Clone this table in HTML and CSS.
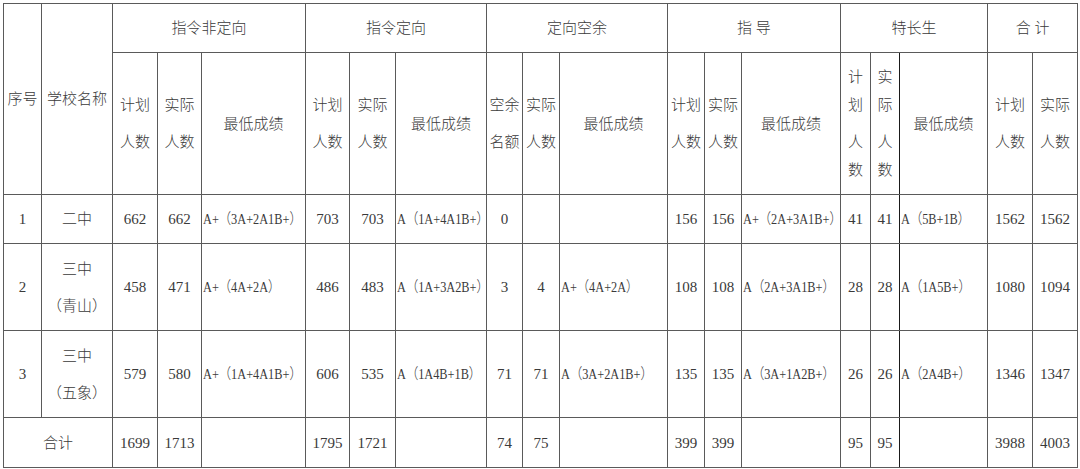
FILE: index.html
```html
<!DOCTYPE html>
<html lang="zh-CN">
<head>
<meta charset="utf-8">
<title>招生录取统计表</title>
<link rel="stylesheet" href="styles.css">
</head>
<body>
<table class="grid">
  <colgroup>
    <col class="w38"><col class="w71">
    <col class="w45"><col class="w44"><col class="w104">
    <col class="w44"><col class="w46"><col class="w91">
    <col class="w36"><col class="w37"><col class="w108">
    <col class="w37"><col class="w37"><col class="w99">
    <col class="w30"><col class="w29"><col class="w88">
    <col class="w45"><col class="w45">
  </colgroup>
  <tr class="rh1">
    <td rowspan="2">序号</td>
    <td rowspan="2">学校名称</td>
    <td colspan="3">指令非定向</td>
    <td colspan="3">指令定向</td>
    <td colspan="3">定向空余</td>
    <td colspan="3">指&nbsp;导</td>
    <td colspan="3">特长生</td>
    <td colspan="2">合&nbsp;计</td>
  </tr>
  <tr class="rh2">
    <td><p>计划</p><p>人数</p></td>
    <td><p>实际</p><p>人数</p></td>
    <td>最低成绩</td>
    <td><p>计划</p><p>人数</p></td>
    <td><p>实际</p><p>人数</p></td>
    <td>最低成绩</td>
    <td><p>空余</p><p>名额</p></td>
    <td><p>实际</p><p>人数</p></td>
    <td>最低成绩</td>
    <td><p>计划</p><p>人数</p></td>
    <td><p>实际</p><p>人数</p></td>
    <td>最低成绩</td>
    <td class="narrow"><p>计划</p><p>人数</p></td>
    <td class="narrow dr"><p>实际</p><p>人数</p></td>
    <td class="dl">最低成绩</td>
    <td><p>计划</p><p>人数</p></td>
    <td><p>实际</p><p>人数</p></td>
  </tr>
  <tr class="rd1">
    <td>1</td>
    <td>二中</td>
    <td>662</td><td>662</td><td class="g"><span class="gt">A+（3A+2A1B+）</span></td>
    <td>703</td><td>703</td><td class="g"><span class="gt">A（1A+4A1B+）</span></td>
    <td>0</td><td></td><td class="g"></td>
    <td>156</td><td>156</td><td class="g"><span class="gt">A+（2A+3A1B+）</span></td>
    <td>41</td><td class="dr">41</td><td class="g dl"><span class="gt">A（5B+1B）</span></td>
    <td>1562</td><td>1562</td>
  </tr>
  <tr class="rd2">
    <td>2</td>
    <td><p>三中</p><p>（青山）</p></td>
    <td>458</td><td>471</td><td class="g"><span class="gt">A+（4A+2A）</span></td>
    <td>486</td><td>483</td><td class="g"><span class="gt">A（1A+3A2B+）</span></td>
    <td>3</td><td>4</td><td class="g"><span class="gt">A+（4A+2A）</span></td>
    <td>108</td><td>108</td><td class="g"><span class="gt">A（2A+3A1B+）</span></td>
    <td>28</td><td class="dr">28</td><td class="g dl"><span class="gt">A（1A5B+）</span></td>
    <td>1080</td><td>1094</td>
  </tr>
  <tr class="rd2">
    <td>3</td>
    <td><p>三中</p><p>（五象）</p></td>
    <td>579</td><td>580</td><td class="g"><span class="gt">A+（1A+4A1B+）</span></td>
    <td>606</td><td>535</td><td class="g"><span class="gt">A（1A4B+1B）</span></td>
    <td>71</td><td>71</td><td class="g"><span class="gt">A（3A+2A1B+）</span></td>
    <td>135</td><td>135</td><td class="g"><span class="gt">A（3A+1A2B+）</span></td>
    <td>26</td><td class="dr">26</td><td class="g dl"><span class="gt">A（2A4B+）</span></td>
    <td>1346</td><td>1347</td>
  </tr>
  <tr class="rt">
    <td colspan="2">合计</td>
    <td>1699</td><td>1713</td><td class="g"></td>
    <td>1795</td><td>1721</td><td class="g"></td>
    <td>74</td><td>75</td><td class="g"></td>
    <td>399</td><td>399</td><td class="g"></td>
    <td>95</td><td class="dr">95</td><td class="g dl"></td>
    <td>3988</td><td>4003</td>
  </tr>
</table>
</body>
</html>
```

FILE: styles.css
```css
html, body {
  margin: 0;
  padding: 0;
  background: #ffffff;
}

.grid {
  margin: 3px 0 0 3px;
  border-collapse: collapse;
  table-layout: fixed;
  width: 1074px;
  font-family: "Liberation Serif", "Noto Sans CJK SC", serif;
  font-size: 15px;
  font-weight: 300;
  color: #3a3a3a;
}

.grid td {
  border: 1px solid #5a5a5a;
  padding: 0 2px;
  text-align: center;
  vertical-align: middle;
  line-height: 28px;
  white-space: normal;
}

.grid p {
  margin: 0;
  line-height: 28px;
}

.grid p + p {
  margin-top: 9px;
}

.grid td.g {
  text-align: left;
  padding: 0 0 0 1px;
  white-space: nowrap;
}

.gt {
  display: inline-block;
  transform: scaleX(0.82);
  transform-origin: left center;
  margin-right: -22px;
}

.grid td.dl {
  border-left-color: #1a1a1a;
}

.grid td.dr {
  border-right-color: #1a1a1a;
}

.rh1 { height: 49px; }
.rh2 { height: 142px; }
.rd1 { height: 49px; }
.rd2 { height: 87px; }
.rt  { height: 50px; }

.w29 { width: 29px; }
.w30 { width: 30px; }
.w36 { width: 36px; }
.w37 { width: 37px; }
.w38 { width: 38px; }
.w44 { width: 44px; }
.w45 { width: 45px; }
.w46 { width: 46px; }
.w71 { width: 71px; }
.w88 { width: 88px; }
.w91 { width: 91px; }
.w99 { width: 99px; }
.w104 { width: 104px; }
.w108 { width: 108px; }
```
